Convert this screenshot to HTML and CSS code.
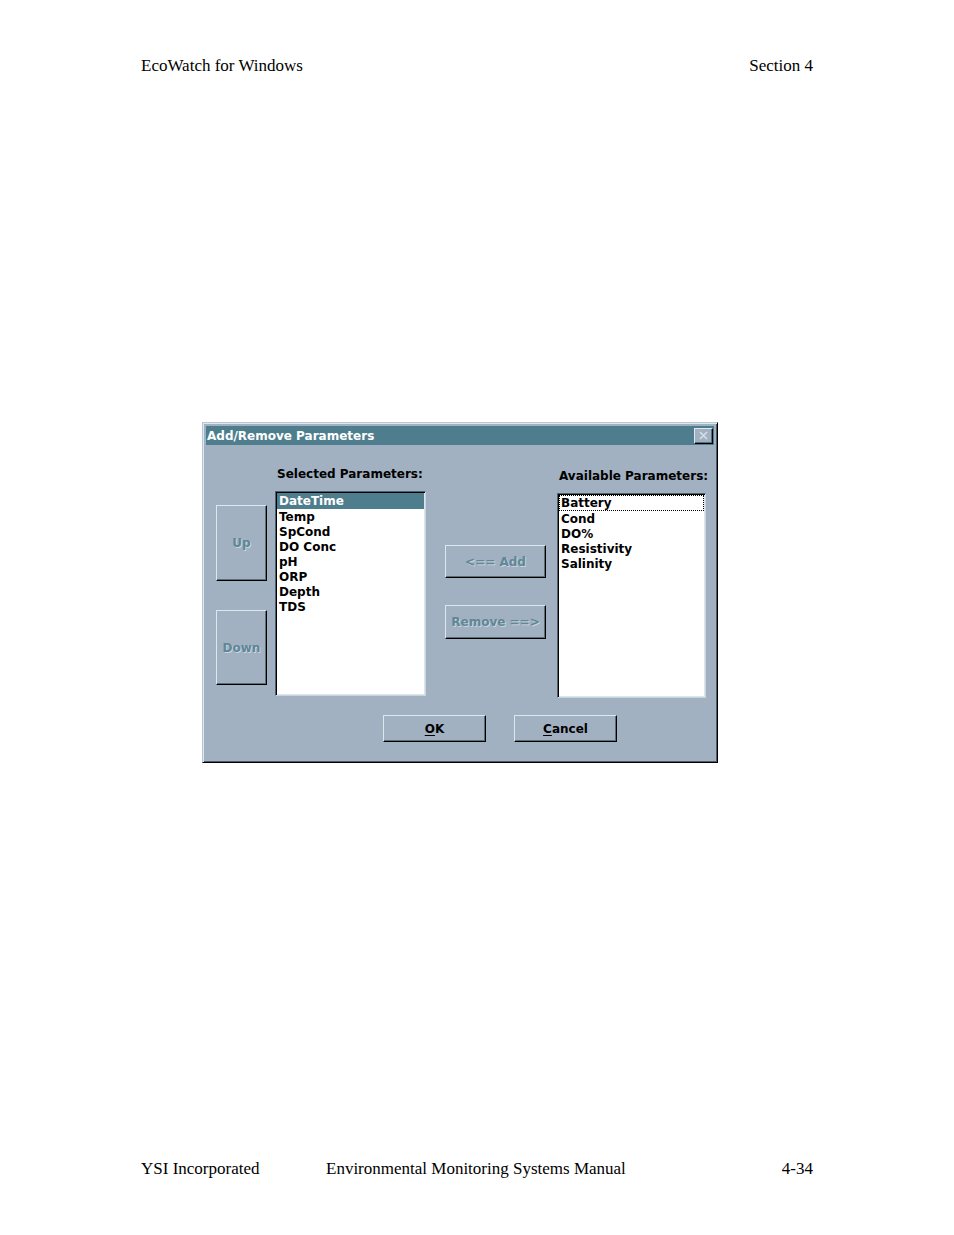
FILE: index.html
```html
<!DOCTYPE html>
<html>
<head>
<meta charset="utf-8">
<link rel="stylesheet" href="styles.css">
</head>
<body>
<div class="page">
  <div class="header">
    <span>EcoWatch for Windows</span>
    <span>Section 4</span>
  </div>

  <div class="dialog">
    <div class="titlebar">
      <span class="title">Add/Remove Parameters</span>
      <span class="close">
        <svg width="13" height="11" viewBox="0 0 13 11"><path d="M3 2 L10 9 M10 2 L3 9" stroke="#d4dee6" stroke-width="1.6" fill="none"/></svg>
      </span>
    </div>
    <div class="body">
      <div class="cols">
        <div class="col col-updown">
          <div class="btn btn-tall disabled">Up</div>
          <div class="btn btn-tall btn-down disabled">Down</div>
        </div>
        <div class="col col-selected">
          <div class="label">Selected Parameters:</div>
          <div class="list">
            <div class="item sel">DateTime</div>
            <div class="item">Temp</div>
            <div class="item">SpCond</div>
            <div class="item">DO Conc</div>
            <div class="item">pH</div>
            <div class="item">ORP</div>
            <div class="item">Depth</div>
            <div class="item">TDS</div>
          </div>
        </div>
        <div class="col col-mid">
          <div class="btn btn-wide disabled">&lt;== Add</div>
          <div class="btn btn-wide btn-remove disabled">Remove ==&gt;</div>
        </div>
        <div class="col col-avail">
          <div class="label">Available Parameters:</div>
          <div class="list list-avail">
            <div class="item focus">Battery</div>
            <div class="item">Cond</div>
            <div class="item">DO%</div>
            <div class="item">Resistivity</div>
            <div class="item">Salinity</div>
          </div>
        </div>
      </div>
      <div class="bottom">
        <div class="btn btn-ok"><u>O</u>K</div>
        <div class="btn btn-ok"><u>C</u>ancel</div>
      </div>
    </div>
  </div>

  <div class="footer">
    <span class="f-left">YSI Incorporated</span>
    <span class="f-mid">Environmental Monitoring Systems Manual</span>
    <span class="f-right">4-34</span>
  </div>
</div>
</body>
</html>
```

FILE: styles.css
```css
html, body {
  margin: 0;
  padding: 0;
  background: #ffffff;
}

.page {
  width: 954px;
  height: 1235px;
  box-sizing: border-box;
  padding: 56px 141px 57px 141px;
  display: flex;
  flex-direction: column;
  font-family: "Liberation Serif", "Times New Roman", serif;
  font-size: 17px;
  color: #000;
}

.header {
  display: flex;
  justify-content: space-between;
  line-height: 19px;
}

.footer {
  margin-top: auto;
  display: flex;
  line-height: 19px;
}

.f-left { width: 185px; }
.f-mid { flex: 1; }
.f-right { text-align: right; }

.dialog {
  margin-top: 347px;
  margin-left: 61px;
  width: 516px;
  height: 341px;
  box-sizing: border-box;
  background: #a1b1c1;
  border: 1px solid;
  border-color: #b9c7d3 #000 #000 #b9c7d3;
  box-shadow: inset 1px 1px 0 #dfe7ee, inset -1px -1px 0 #4d5d69;
  padding: 3px;
  font-family: "DejaVu Sans", sans-serif;
  font-weight: bold;
  font-size: 12px;
  color: #000;
}

.titlebar {
  height: 19px;
  background: #4e7e8e;
  display: flex;
  align-items: center;
  justify-content: space-between;
  padding-left: 1px;
}

.title {
  color: #ffffff;
  line-height: 19px;
  padding-top: 2px;
}

.close {
  width: 19px;
  height: 16px;
  box-sizing: border-box;
  margin-right: 1px;
  background: #a1b1c1;
  border: 1px solid;
  border-color: #dfe7ee #000 #000 #dfe7ee;
  box-shadow: inset -1px -1px 0 #5d6d79;
  display: flex;
  align-items: center;
  justify-content: center;
}

.body {
  padding-left: 10px;
}

.cols {
  display: flex;
  align-items: flex-start;
  height: 253px;
}

.col {
  display: flex;
  flex-direction: column;
}

.col-updown {
  width: 51px;
  margin-top: 60px;
}

.col-selected {
  width: 151px;
  margin-left: 8px;
  margin-top: 21px;
}

.col-mid {
  width: 101px;
  margin-left: 19px;
  margin-top: 100px;
}

.col-avail {
  width: 149px;
  margin-left: 11px;
  margin-top: 23px;
}

.label {
  line-height: 16px;
  padding-left: 2px;
  margin-bottom: 9px;
  white-space: nowrap;
}

.list {
  height: 205px;
  box-sizing: border-box;
  background: #ffffff;
  border: 1px solid;
  border-color: #4d6270 #c9d5de #c9d5de #4d6270;
  box-shadow: inset 1px 1px 0 #000, inset -1px -1px 0 #dce5ec;
  padding: 1px;
}

.item {
  height: 15px;
  line-height: 16px;
  padding-left: 2px;
  white-space: nowrap;
}

.item.sel {
  background: #4e7e8e;
  color: #ffffff;
  height: 16px;
  line-height: 17px;
}

.list-avail .item:first-child {
  height: 16px;
  line-height: 17px;
}

.item.focus {
  outline: 1px dotted #000;
  outline-offset: -1px;
}

.btn {
  box-sizing: border-box;
  background: #a1b1c1;
  border: 1px solid;
  border-color: #dfe7ee #000 #000 #dfe7ee;
  box-shadow: inset -1px -1px 0 #5d6d79;
  display: flex;
  align-items: center;
  justify-content: center;
  white-space: nowrap;
}

.btn.disabled {
  color: #5f8797;
  text-shadow: 1px 1px 0 #c9d5de;
}

.btn-tall {
  height: 76px;
}

.btn-down {
  margin-top: 29px;
  height: 75px;
}

.btn-wide {
  height: 33px;
}

.btn-remove {
  margin-top: 27px;
  height: 34px;
}

.bottom {
  display: flex;
  gap: 28px;
  margin-top: 17px;
  padding-left: 167px;
}

.btn-ok {
  width: 103px;
  height: 27px;
}

.btn-ok u {
  text-decoration-thickness: 1px;
  text-underline-offset: 2px;
}
```
